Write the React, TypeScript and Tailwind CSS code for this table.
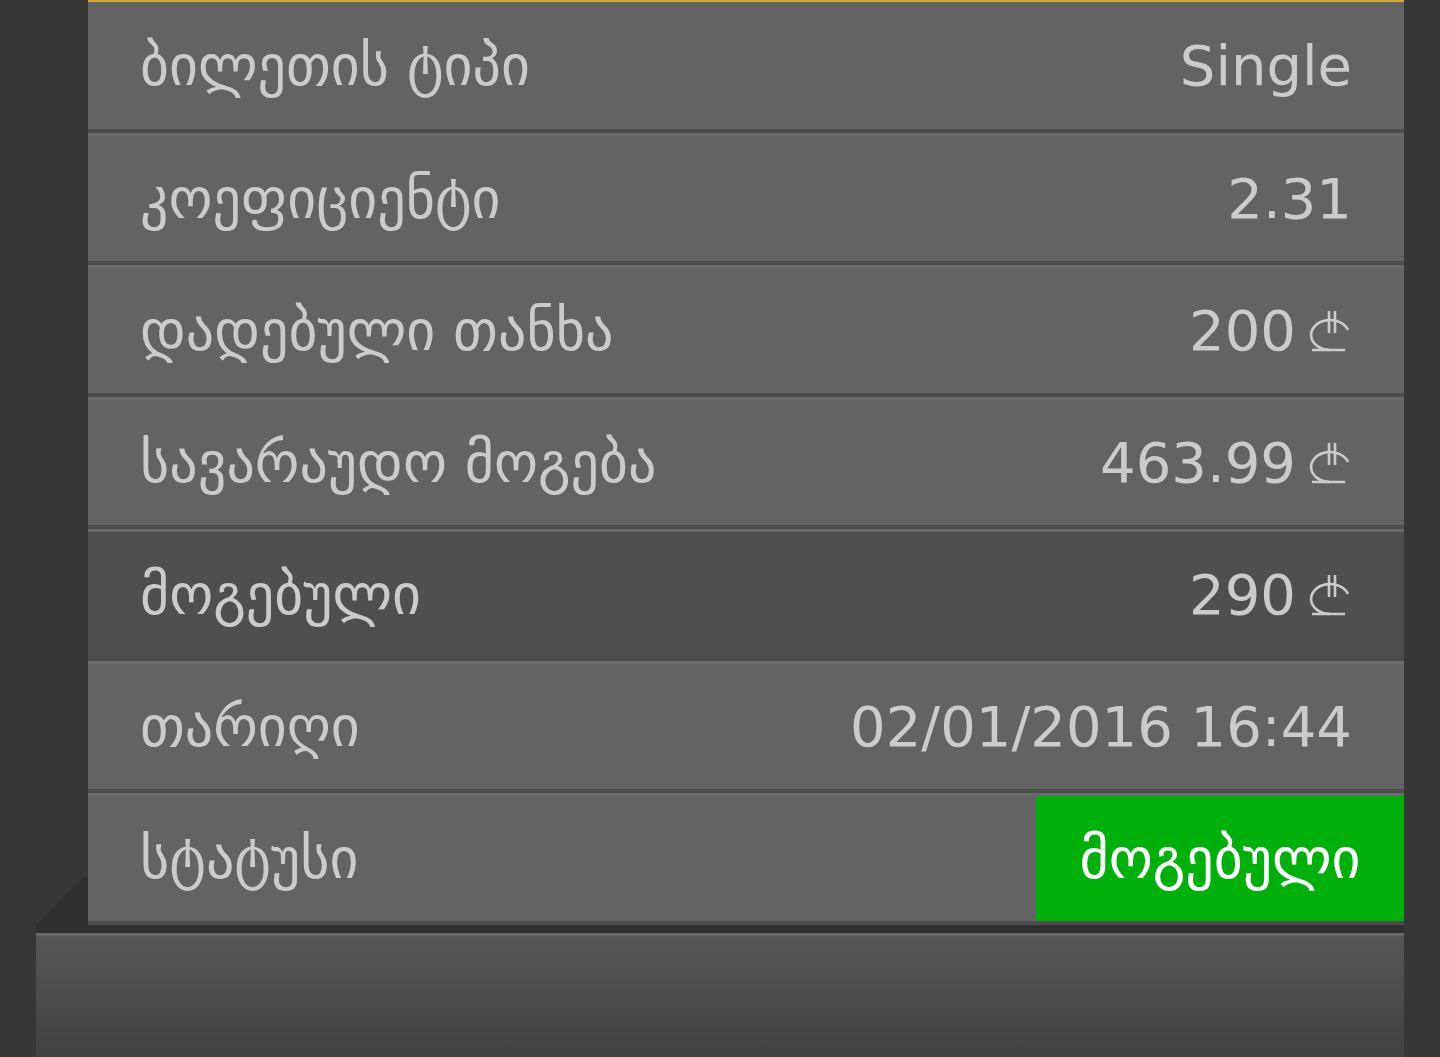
const rows = [
  { label: "ბილეთის ტიპი", value: "Single" },
  { label: "კოეფიციენტი", value: "2.31" },
  { label: "დადებული თანხა", value: "200", lari: true },
  { label: "სავარაუდო მოგება", value: "463.99", lari: true },
  { label: "მოგებული", value: "290", lari: true, dark: true },
  { label: "თარიღი", value: "02/01/2016 16:44" },
  { label: "სტატუსი", status: "მოგებული" },
];

// lari currency icon
const LariIcon = () => (
  <svg
    width="46"
    height="43"
    viewBox="0 0 46 43"
    fill="none"
    stroke="currentColor"
    strokeWidth="2.6"
    className="ml-[12px] inline-block align-[-2px]"
  >
    <path d="M40 21 A19 15 0 1 0 22 41" />
    <path d="M4 41 H37" />
    <path d="M21 2 V24 M27 2 V24" />
  </svg>
);

const App = () => {
  return (
    <div
      className="min-h-screen bg-[#373737] px-9 text-[56px] text-[#cbcbcb]"
      style={{ fontFamily: '"DejaVu Sans", "Noto Sans", sans-serif' }}
    >
      <div className="flex">
        {/* bevel on the left */}
        <div className="w-[52px] flex flex-col justify-end">
          <div className="h-[48px] bg-[#2f2f2f] [clip-path:polygon(47px_0,52px_0,52px_100%,0_100%)]" />
        </div>
        <div className="flex-1 flex flex-col">
          {rows.map((row, index) => (
            <div
              key={index}
              className={`flex items-center justify-between border-b-4 border-b-[#4c4c4c] ${
                index === 0
                  ? "h-[133px] border-t-2 border-t-[#cfa934]"
                  : "h-[132px] border-t-[3px] border-t-[#6b6b6b]"
              } ${row.dark ? "bg-[#4f4f4f]" : "bg-[#636363]"}`}
            >
              <span className="pl-[52px] leading-none whitespace-nowrap">{row.label}</span>
              {row.status ? (
                <div className="h-full w-[368px] bg-[#00b00a] flex items-center justify-center text-white leading-none">
                  {row.status}
                </div>
              ) : (
                <span className={`${row.lari ? "pr-[50px]" : "pr-[52px]"} leading-none whitespace-nowrap`}>
                  {row.value}
                  {row.lari && <LariIcon />}
                </span>
              )}
            </div>
          ))}
        </div>
      </div>
      <div className="h-[8px] bg-[#2f2f2f]" />
      <div className="h-[124px] border-t-[3px] border-t-[#676767] bg-gradient-to-b from-[#575757] to-[#414141]" />
    </div>
  );
};

export default App;
